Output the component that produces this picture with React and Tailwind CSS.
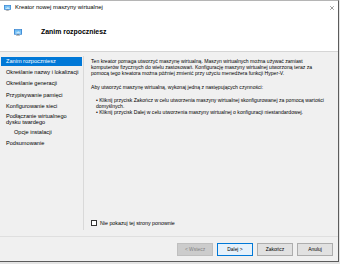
import React from 'react';

const NAV = [
  { label: 'Zanim rozpoczniesz', active: true },
  { label: 'Określanie nazwy i lokalizacji' },
  { label: 'Określanie generacji' },
  { label: 'Przypisywanie pamięci' },
  { label: 'Konfigurowanie sieci' },
  { label: ['Podłączanie wirtualnego', 'dysku twardego'] },
  { label: 'Opcje instalacji', sub: true },
  { label: 'Podsumowanie' },
];

function VmIcon({ className }) {
  return (
    <svg viewBox="0 0 16 13" className={className}>
      <rect x="0.5" y="0.5" width="15" height="9.5" fill="#3d9ae8" stroke="#1c6fc4" />
      <rect x="2" y="2" width="12" height="6.5" fill="#7cc4f5" />
      <path d="M2 8.5 L9 4 L14 8.5 Z" fill="#c8e8fb" />
      <rect x="6" y="10.5" width="4" height="1.2" fill="#6b6b6b" />
      <rect x="4" y="11.7" width="8" height="1" fill="#8a8a8a" />
    </svg>
  );
}

function WizButton({ children, primary, disabled }) {
  return (
    <button
      className={`w-[36px] h-[13px] flex items-center justify-center text-[4.9px] border ${
        disabled
          ? 'bg-[#cccccc] border-[#bfbfbf] text-[#838383]'
          : primary
          ? 'bg-[#e5f1fb] border-[#0078d7] text-black'
          : 'bg-[#e1e1e1] border-[#adadad] text-black'
      }`}
    >
      {children}
    </button>
  );
}

export default function App() {
  return (
    <div className="w-[340px] h-[264px] bg-[#e4e4e4] overflow-hidden font-['Liberation_Sans',Arial,sans-serif]">
      <div className="w-[339px] h-[262px] flex flex-col bg-[#f0f0f0] border-t border-r border-b border-t-[#b5b5b5] border-r-[#5c5c5c] border-b-[#5c5c5c]">
        {/* Title bar */}
        <div className="h-[13px] bg-white flex items-center pl-[4px] pr-[4px]">
          <VmIcon className="w-[7px] h-[6px]" />
          <span className="ml-[4px] text-[5.9px] text-black leading-none">Kreator nowej maszyny wirtualnej</span>
          <svg viewBox="0 0 10 10" className="ml-auto w-[4px] h-[4px]">
            <path d="M0.5 0.5 L9.5 9.5 M9.5 0.5 L0.5 9.5" stroke="#333" strokeWidth="1.2" />
          </svg>
        </div>

        {/* Header */}
        <div className="h-[38px] bg-white border-b border-[#d5d5d5] flex items-center pl-[14px] pb-[1px]">
          <VmIcon className="w-[8px] h-[7px]" />
          <span className="ml-[19px] text-[6.9px] font-bold text-black leading-none">Zanim rozpoczniesz</span>
        </div>

        {/* Body */}
        <div className="flex-1 flex min-h-0">
          <div className="w-[84px] mt-[4px] mb-[6px] border-r border-[#d9d9d9] pt-[1px] flex flex-col gap-[2.2px]">
            {NAV.map((n, i) => (
              <div
                key={i}
                className={`ml-[1px] w-[81px] text-[5.6px] whitespace-nowrap ${
                  n.sub ? 'pl-[13px]' : 'pl-[5px]'
                } ${
                  Array.isArray(n.label) ? 'leading-[6px] py-[0.5px]' : 'h-[9px] leading-[9px]'
                } ${n.active ? 'bg-[#0078d7] text-white' : 'text-black'}`}
              >
                {Array.isArray(n.label) ? (
                  <>
                    {n.label[0]}
                    <br />
                    {n.label[1]}
                  </>
                ) : (
                  n.label
                )}
              </div>
            ))}
          </div>

          <div className="flex-1 flex flex-col pl-[7px] pt-[6px] pb-[10px] text-[5.1px] leading-[6px] text-black whitespace-nowrap">
            <p>
              Ten kreator pomaga utworzyć maszynę wirtualną. Maszyn wirtualnych można używać zamiast
              <br />
              komputerów fizycznych do wielu zastosowań. Konfigurację maszyny wirtualnej utworzoną teraz za
              <br />
              pomocą tego kreatora można później zmienić przy użyciu menedżera funkcji Hyper-V.
            </p>
            <p className="mt-[8px]">Aby utworzyć maszynę wirtualną, wykonaj jedną z następujących czynności:</p>
            <p className="mt-[7px] pl-[5px]">
              • Kliknij przycisk Zakończ w celu utworzenia maszyny wirtualnej skonfigurowanej za pomocą wartości
              <br />
              domyślnych.
            </p>
            <p className="pl-[5px]">• Kliknij przycisk Dalej w celu utworzenia maszyny wirtualnej o konfiguracji niestandardowej.</p>

            <div className="mt-auto flex items-center">
              <span className="w-[6px] h-[6px] border border-[#333333] bg-white" />
              <span className="ml-[3px] text-[5.3px]">Nie pokazuj tej strony ponownie</span>
            </div>
          </div>
        </div>

        {/* Footer */}
        <div className="h-[25px] border-t border-[#dfdfdf] flex items-start justify-end gap-[4px] pt-[6px] pr-[5px]">
          <WizButton disabled>&lt; Wstecz</WizButton>
          <WizButton primary>Dalej &gt;</WizButton>
          <WizButton>Zakończ</WizButton>
          <WizButton>Anuluj</WizButton>
        </div>
      </div>
    </div>
  );
}
